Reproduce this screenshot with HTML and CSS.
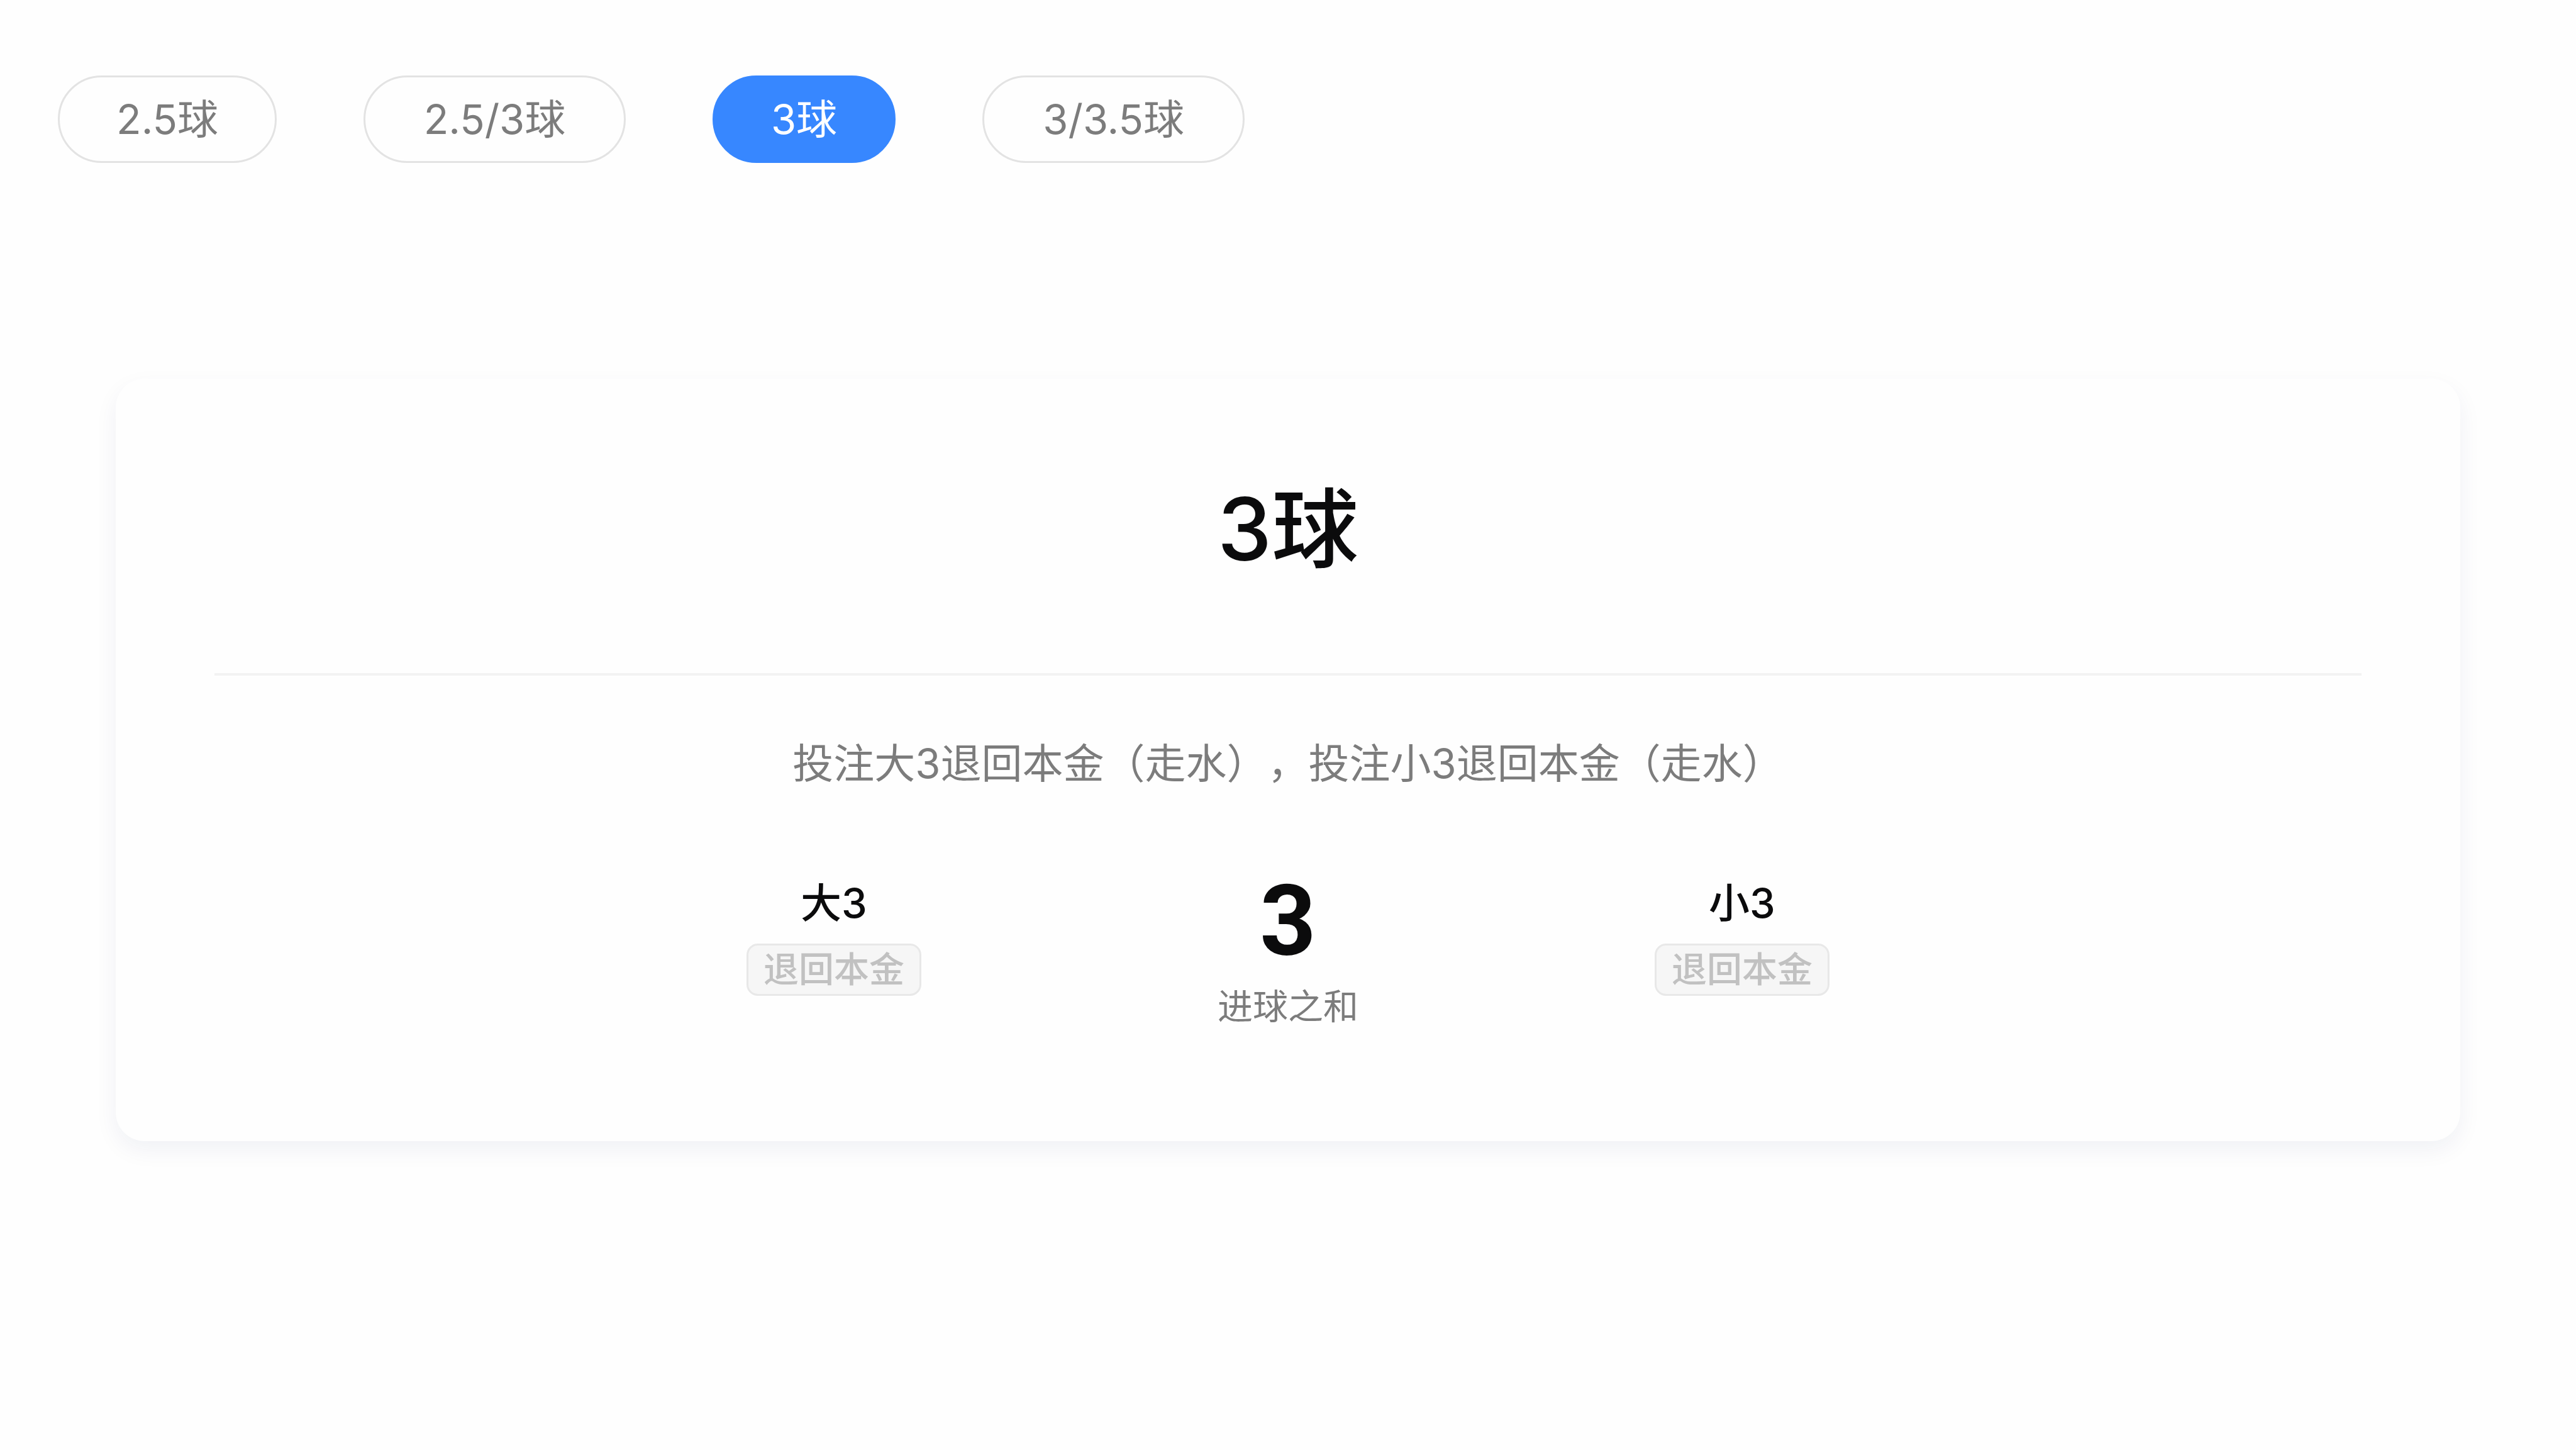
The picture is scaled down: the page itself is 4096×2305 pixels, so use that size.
FILE: index.html
```html
<!DOCTYPE html>
<html lang="zh-CN">
<head>
<meta charset="utf-8">
<title>3球</title>
<link rel="stylesheet" href="styles.css">
</head>
<body>
<nav class="tabs">
  <button type="button" class="tab">2.5球</button>
  <button type="button" class="tab tab-wide">2.5/3球</button>
  <button type="button" class="tab tab-active" aria-pressed="true">3球</button>
  <button type="button" class="tab tab-wide">3/3.5球</button>
</nav>
<main class="card">
  <h1 class="title">3球</h1>
  <p class="summary">投注大3退回本金（走水），投注小3退回本金（走水）</p>
  <div class="outcomes">
    <section class="outcome">
      <h2 class="pick">大3</h2>
      <span class="tag">退回本金</span>
    </section>
    <section class="outcome">
      <strong class="total">3</strong>
      <span class="caption">进球之和</span>
    </section>
    <section class="outcome">
      <h2 class="pick">小3</h2>
      <span class="tag">退回本金</span>
    </section>
  </div>
</main>
</body>
</html>
```

FILE: styles.css
```css
* {
  box-sizing: border-box;
}

body {
  min-height: 100vh;
  margin: 0;
  background: #fefefe;
  color: #0b0b0c;
  font-family: Inter, "Noto Sans CJK SC", sans-serif;
  font-size: 65px;
  line-height: 92px;
  text-spacing-trim: space-all;
}

h1,
h2,
p {
  margin: 0;
}

.tabs {
  display: flex;
  gap: 138px;
  padding: 120px 92px 0;
}

.tab {
  height: 139px;
  padding: 0 90px;
  border: 3px solid #e3e3e3;
  border-radius: 70px;
  background: #fefefe;
  color: #7c7c7c;
  font: inherit;
}

.tab-wide {
  min-width: 417px;
}

.tab-active {
  border-color: #3787ff;
  background: #3787ff;
  color: #fff;
}

.card {
  margin: 343px 184px 0;
  padding: 141px 157px 174px;
  border-radius: 46px;
  background: #fefefe;
  box-shadow: 0 14px 37px rgba(15, 40, 100, 0.06);
  text-align: center;
}

.title {
  padding-bottom: 131px;
  border-bottom: 4px solid #f3f3f3;
  font-size: 138px;
  font-weight: 500;
  line-height: 196px;
}

.summary {
  padding: 94px 0 126px;
  color: #7c7c7c;
}

.outcomes {
  display: flex;
  justify-content: center;
}

.outcome {
  display: flex;
  flex-direction: column;
  align-items: center;
  width: 722px;
}

.pick {
  margin: 4px 0 18px;
  font-size: 65px;
  font-weight: 500;
}

.tag {
  padding: 0 24px;
  border: 3px solid #e8e8e8;
  border-radius: 18px;
  background: #f6f6f6;
  color: #c1c1c1;
  font-size: 56px;
  font-weight: 500;
  line-height: 77px;
}

.total {
  margin-bottom: 18px;
  font-family: Roboto, sans-serif;
  font-size: 156px;
  font-weight: 700;
  line-height: 156px;
}

.caption {
  color: #7c7c7c;
  font-size: 56px;
  line-height: 80px;
}
```
